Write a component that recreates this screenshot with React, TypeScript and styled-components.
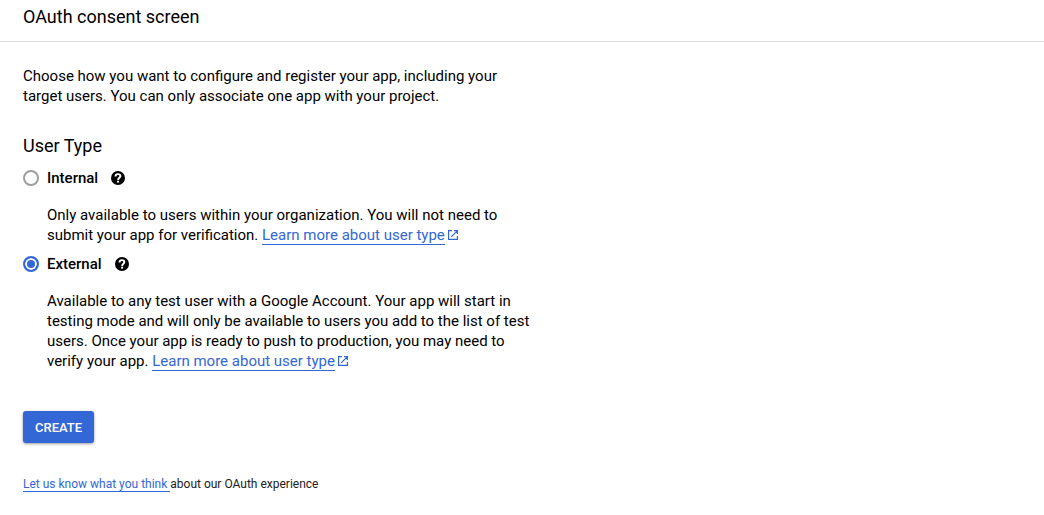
import React from "react";
import styled, { createGlobalStyle } from "styled-components";

const GlobalStyle = createGlobalStyle`
  * { box-sizing: border-box; }
  body {
    margin: 0;
    background: #fff;
    color: #000;
    font-family: Roboto, "Liberation Sans", sans-serif;
    font-size: 15px;
    line-height: 20px;
  }
`;

const Header = styled.header`
  padding: 5px 23px 12px;
  border-bottom: 1px solid #dadce0;
`;

const Title = styled.h1`
  margin: 0;
  font-size: 18px;
  font-weight: 400;
  line-height: 24px;
`;

const Main = styled.main`
  padding: 24px 23px;
`;

const Intro = styled.p`
  margin: 0;
  max-width: 510px;
`;

const UserTypes = styled.fieldset`
  margin: 27px 0 0;
  padding: 0;
  border: 0;
  min-width: 0;
  max-width: 510px;
`;

const Legend = styled.legend`
  padding: 0;
  font-size: 18px;
  line-height: 26px;
`;

const OptionRow = styled.div`
  display: flex;
  align-items: center;
  height: 20px;
  margin-top: 9px;
`;

const Radio = styled.input`
  appearance: none;
  flex: none;
  width: 16px;
  height: 16px;
  margin: 0 8px 0 0;
  border: 2px solid #9e9e9e;
  border-radius: 50%;
  background: #fff;

  &:checked {
    border-color: #3367d6;
    background: #3367d6;
    box-shadow: inset 0 0 0 2px #fff;
  }
`;

const OptionLabel = styled.label`
  font-weight: 500;
`;

const HelpButton = styled.button`
  display: flex;
  margin: 0 0 0 13px;
  padding: 0;
  border: 0;
  background: none;
  color: #000;
`;

const Description = styled.p`
  margin: 17px 0 0 24px;
`;

const Link = styled.a`
  color: #3367d6;
  text-decoration: none;
  border-bottom: 1px solid #3367d6;
`;

const LinkIcon = styled.svg`
  margin-left: 3px;
  vertical-align: baseline;
  fill: none;
  stroke: #3367d6;
`;

const CreateButton = styled.button`
  display: block;
  height: 32px;
  margin-top: 40px;
  padding: 1px 12px 0;
  border: 0;
  border-radius: 3px;
  background: #3367d6;
  box-shadow: 0 1px 3px rgba(0, 0, 0, 0.4);
  color: #fff;
  font: 500 13px/31px Roboto, "Liberation Sans", sans-serif;
`;

const Feedback = styled.p`
  margin: 33px 0 0;
  color: #212121;
  font-size: 12px;
  line-height: 16px;
`;

function Help({ topic }: { topic: string }) {
  return (
    <HelpButton type="button" aria-label={`Help about ${topic}`}>
      <svg width="14" height="14" viewBox="0 0 14 14" aria-hidden="true">
        <circle cx="7" cy="7" r="7" fill="currentColor" />
        <path
          d="M4.500 5.400C4.500 4 5.600 3.100 7 3.100S9.400 3.900 9.400 5.100C9.400 6.700 7.100 6.800 7.100 8.900"
          fill="none"
          stroke="#fff"
          strokeWidth="1.900"
        />
        <rect x="6.100" y="9.700" width="2" height="1.900" fill="#fff" />
      </svg>
    </HelpButton>
  );
}

function LearnMore() {
  return (
    <>
      <Link href="#user-type">Learn more about user type</Link>
      <LinkIcon width="10" height="10" viewBox="0 0 10 10" aria-hidden="true">
        <path d="M4 .6H.6V9.400H9.400V6M6 .6H9.400V4M9.200 .8L3.200 6.800" strokeWidth="1.200" />
      </LinkIcon>
    </>
  );
}

export default function App() {
  return (
    <>
      <GlobalStyle />
      <Header>
        <Title>OAuth consent screen</Title>
      </Header>
      <Main>
        <Intro>
          Choose how you want to configure and register your app, including your target users. You
          can only associate one app with your project.
        </Intro>
        <UserTypes>
          <Legend>User Type</Legend>
          <OptionRow>
            <Radio type="radio" name="userType" id="internal" />
            <OptionLabel htmlFor="internal">Internal</OptionLabel>
            <Help topic="internal users" />
          </OptionRow>
          <Description>
            Only available to users within your organization. You will not need to submit your app
            for verification. <LearnMore />
          </Description>
          <OptionRow>
            <Radio type="radio" name="userType" id="external" defaultChecked />
            <OptionLabel htmlFor="external">External</OptionLabel>
            <Help topic="external users" />
          </OptionRow>
          <Description>
            Available to any test user with a Google Account. Your app will start in testing mode
            and will only be available to users you add to the list of test users. Once your app is
            ready to push to production, you may need to verify your app. <LearnMore />
          </Description>
        </UserTypes>
        <CreateButton type="button">CREATE</CreateButton>
        <Feedback>
          <Link href="#feedback">Let us know what you think </Link>
          about our OAuth experience
        </Feedback>
      </Main>
    </>
  );
}
